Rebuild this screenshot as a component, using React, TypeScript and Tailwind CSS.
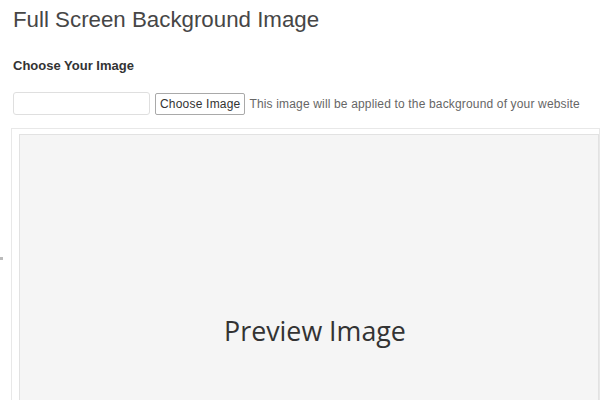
import React from 'react';

export default function App() {
  return (
    <div className="relative w-[600px] h-[400px] overflow-hidden bg-white font-['Liberation_Sans',Arial,sans-serif]">
      <div className="absolute left-0 top-[257px] w-[3px] h-[3px] bg-[#bbb]" />
      <div className="pl-[13px] pt-[5px]">
        <h1 className="text-[22.3px] leading-[30px] text-[#464646]">Full Screen Background Image</h1>
        <h3 className="mt-[22px] text-[13px] font-bold text-[#333] leading-[18px]">Choose Your Image</h3>
        <div className="mt-[17px] flex items-center gap-[5px]">
          <input
            type="text"
            className="w-[137px] h-[23px] border border-[#dfdfdf] rounded-[3px] bg-white"
          />
          <button className="h-[22px] px-[4px] border border-[#a9a9a9] rounded-[2px] bg-white text-[12px] tracking-[0.2px] text-[#333]">
            Choose Image
          </button>
          <span className="-ml-[1px] text-[12px] tracking-[0.16px] text-[#666]">This image will be applied to the background of your website</span>
        </div>
      </div>
      <div className="ml-[11px] mt-[13px] border border-[#e8e8e8] pl-[7px] pt-[5px] h-[300px]">
        <div className="border border-[#e2e2e2] bg-[#f5f5f5] h-[300px] flex justify-center pt-[179px]">
          <span className="ml-[12px] text-[26.8px] leading-[34px] text-[#333] font-['Open_Sans',sans-serif]">Preview Image</span>
        </div>
      </div>
    </div>
  );
}
